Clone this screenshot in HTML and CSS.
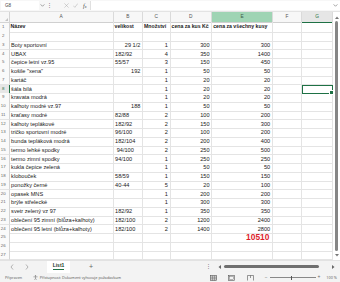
FILE: index.html
```html
<!DOCTYPE html>
<html lang="cs">
<head>
<meta charset="utf-8">
<title>List1</title>
<link rel="stylesheet" href="styles.css">
</head>
<body>
<div class="app">
  <div class="fbar">
    <div class="namebox">G8</div>
    <svg class="ico chev" viewBox="0 0 6 4" width="5" height="3"><path d="M0.5 0.5 L3 3 L5.5 0.5" fill="none" stroke="#666" stroke-width="0.8"/></svg>
    <span class="dots">⋮</span>
    <svg class="ico fx-x" viewBox="0 0 6 6" width="5" height="5"><path d="M0.5 0.5 L5.5 5.5 M5.5 0.5 L0.5 5.5" stroke="#aaa" stroke-width="0.6"/></svg>
    <svg class="ico fx-ok" viewBox="0 0 6 6" width="5" height="5"><path d="M0.3 3.2 L2.2 5.2 L5.8 0.6" fill="none" stroke="#aaa" stroke-width="0.6"/></svg>
    <span class="fx">f<small>x</small></span>
    <div class="finput">
      <svg class="ico" viewBox="0 0 6 4" width="5" height="3"><path d="M0.5 0.5 L3 3 L5.5 0.5" fill="none" stroke="#666" stroke-width="0.8"/></svg>
    </div>
  </div>

  <div class="main">
    <div class="sheet">
      <div class="row hdr">
        <div class="corner"></div><div class="ch">A</div><div class="ch">B</div><div class="ch">C</div><div class="ch">D</div><div class="ch ch-e">E</div><div class="ch">F</div><div class="ch ch-cur">G</div>
      </div>
      <div class="row r1">
        <div class="rh">1</div><div class="c">Název</div><div class="c">velikost</div><div class="c">Množství</div><div class="c">cena za kus Kč</div><div class="c">cena za všechny kusy</div><div class="c"></div><div class="c"></div>
      </div>
      <div class="row">
        <div class="rh">2</div><div class="c"></div><div class="c"></div><div class="c"></div><div class="c"></div><div class="c"></div><div class="c"></div><div class="c"></div>
      </div>
      <div class="row">
        <div class="rh">3</div><div class="c">Boty sportovní</div><div class="c r">29 1/2</div><div class="c r">1</div><div class="c r">300</div><div class="c r">300</div><div class="c"></div><div class="c"></div>
      </div>
      <div class="row">
        <div class="rh">4</div><div class="c">UBAX</div><div class="c">182/92</div><div class="c r">4</div><div class="c r">350</div><div class="c r">1400</div><div class="c"></div><div class="c"></div>
      </div>
      <div class="row">
        <div class="rh">5</div><div class="c">čepice letní vz.95</div><div class="c">55/57</div><div class="c r">3</div><div class="c r">150</div><div class="c r">450</div><div class="c"></div><div class="c"></div>
      </div>
      <div class="row">
        <div class="rh">6</div><div class="c">košile "xena"</div><div class="c r">192</div><div class="c r">1</div><div class="c r">50</div><div class="c r">50</div><div class="c"></div><div class="c"></div>
      </div>
      <div class="row">
        <div class="rh">7</div><div class="c">kartáč</div><div class="c"></div><div class="c r">1</div><div class="c r">20</div><div class="c r">20</div><div class="c"></div><div class="c"></div>
      </div>
      <div class="row">
        <div class="rh rh-cur">8</div><div class="c">šála bílá</div><div class="c"></div><div class="c r">1</div><div class="c r">20</div><div class="c r">20</div><div class="c"></div><div class="c sel"></div>
      </div>
      <div class="row">
        <div class="rh">9</div><div class="c">kravata modrá</div><div class="c"></div><div class="c r">1</div><div class="c r">20</div><div class="c r">20</div><div class="c"></div><div class="c"></div>
      </div>
      <div class="row">
        <div class="rh">10</div><div class="c">kalhoty modré vz.97</div><div class="c r">188</div><div class="c r">1</div><div class="c r">50</div><div class="c r">50</div><div class="c"></div><div class="c"></div>
      </div>
      <div class="row">
        <div class="rh">11</div><div class="c">kraťasy modré</div><div class="c">82/88</div><div class="c r">2</div><div class="c r">100</div><div class="c r">200</div><div class="c"></div><div class="c"></div>
      </div>
      <div class="row">
        <div class="rh">12</div><div class="c">kalhoty teplákové</div><div class="c">182/92</div><div class="c r">2</div><div class="c r">150</div><div class="c r">300</div><div class="c"></div><div class="c"></div>
      </div>
      <div class="row">
        <div class="rh">13</div><div class="c">tričko sportovní modré</div><div class="c">96/100</div><div class="c r">2</div><div class="c r">100</div><div class="c r">200</div><div class="c"></div><div class="c"></div>
      </div>
      <div class="row">
        <div class="rh">14</div><div class="c">bunda tepláková modrá</div><div class="c">182/104</div><div class="c r">2</div><div class="c r">200</div><div class="c r">400</div><div class="c"></div><div class="c"></div>
      </div>
      <div class="row">
        <div class="rh">15</div><div class="c">termo lehké spodky</div><div class="c ind">94/100</div><div class="c r">2</div><div class="c r">250</div><div class="c r">500</div><div class="c"></div><div class="c"></div>
      </div>
      <div class="row">
        <div class="rh">16</div><div class="c">termo zimní spodky</div><div class="c">94/100</div><div class="c r">1</div><div class="c r">250</div><div class="c r">250</div><div class="c"></div><div class="c"></div>
      </div>
      <div class="row">
        <div class="rh">17</div><div class="c">kukla čepice zelená</div><div class="c"></div><div class="c r">1</div><div class="c r">50</div><div class="c r">50</div><div class="c"></div><div class="c"></div>
      </div>
      <div class="row">
        <div class="rh">18</div><div class="c">klobouček</div><div class="c">58/59</div><div class="c r">1</div><div class="c r">150</div><div class="c r">150</div><div class="c"></div><div class="c"></div>
      </div>
      <div class="row">
        <div class="rh">19</div><div class="c">ponožky černé</div><div class="c">40-44</div><div class="c r">5</div><div class="c r">20</div><div class="c r">100</div><div class="c"></div><div class="c"></div>
      </div>
      <div class="row">
        <div class="rh">20</div><div class="c">opasek MNS</div><div class="c"></div><div class="c r">1</div><div class="c r">200</div><div class="c r">200</div><div class="c"></div><div class="c"></div>
      </div>
      <div class="row">
        <div class="rh">21</div><div class="c">brýle střelecké</div><div class="c"></div><div class="c r">1</div><div class="c r">300</div><div class="c r">300</div><div class="c"></div><div class="c"></div>
      </div>
      <div class="row">
        <div class="rh">22</div><div class="c">svetr zelený vz 97</div><div class="c">182/92</div><div class="c r">1</div><div class="c r">350</div><div class="c r">350</div><div class="c"></div><div class="c"></div>
      </div>
      <div class="row">
        <div class="rh">23</div><div class="c">oblečení 95 zimní (blůza+kalhoty)</div><div class="c">182/100</div><div class="c r">2</div><div class="c r">1200</div><div class="c r">2400</div><div class="c"></div><div class="c"></div>
      </div>
      <div class="row">
        <div class="rh">24</div><div class="c">oblečení 95 letní (blůza+kalhoty)</div><div class="c">182/100</div><div class="c r">2</div><div class="c r">1400</div><div class="c r">2800</div><div class="c"></div><div class="c"></div>
      </div>
      <div class="row">
        <div class="rh">25</div><div class="c"></div><div class="c"></div><div class="c"></div><div class="c"></div><div class="c r total">10510</div><div class="c"></div><div class="c"></div>
      </div>
      <div class="row">
        <div class="rh">26</div><div class="c"></div><div class="c"></div><div class="c"></div><div class="c"></div><div class="c"></div><div class="c"></div><div class="c"></div>
      </div>
      <div class="row">
        <div class="rh">27</div><div class="c"></div><div class="c"></div><div class="c"></div><div class="c"></div><div class="c"></div><div class="c"></div><div class="c"></div>
      </div>
    </div>
    <div class="vscroll">
      <svg class="arr" viewBox="0 0 4 3" width="4" height="3"><path d="M0 3 L2 0.5 L4 3 Z" fill="#777"/></svg>
      <div class="vthumb"></div>
      <svg class="arr" viewBox="0 0 4 3" width="4" height="3"><path d="M0 0 L2 2.5 L4 0 Z" fill="#777"/></svg>
    </div>
  </div>

  <div class="tabs">
    <svg class="nav" viewBox="0 0 4 6" width="4" height="6"><path d="M3 0.5 L1 3 L3 5.5" fill="none" stroke="#888" stroke-width="0.6"/></svg>
    <svg class="nav nav2" viewBox="0 0 4 6" width="4" height="6"><path d="M1 0.5 L3 3 L1 5.5" fill="none" stroke="#888" stroke-width="0.6"/></svg>
    <div class="tab"><span>List1</span></div>
    <span class="plus">+</span>
    <div class="hs">
      <span class="hdots">⋮</span>
      <svg viewBox="0 0 3 4" width="3" height="4"><path d="M3 0 L0.5 2 L3 4 Z" fill="#666"/></svg>
      <div class="hthumb"></div>
      <svg viewBox="0 0 3 4" width="3" height="4"><path d="M0 0 L2.5 2 L0 4 Z" fill="#666"/></svg>
    </div>
  </div>

  <div class="status">
    <span class="ready">Připraven</span>
    <svg class="acc" viewBox="0 0 6 6" width="5" height="5"><circle cx="3" cy="1" r="0.8" fill="#666"/><path d="M0.5 2.2 H5.5 M3 2.2 V4 M3 4 L1.8 5.8 M3 4 L4.2 5.8" stroke="#666" stroke-width="0.6" fill="none"/></svg>
    <span class="acct">Přístupnost: Dokument vyhovuje požadavkům</span>
    <div class="views">
      <svg viewBox="0 0 7 6" width="7" height="6"><rect x="0.5" y="0.5" width="6" height="5" fill="#d8d8d8" stroke="#555" stroke-width="0.6"/><path d="M0.5 2.2 H6.5 M0.5 3.8 H6.5 M2.5 0.5 V5.5 M4.5 0.5 V5.5" stroke="#555" stroke-width="0.4"/></svg>
      <svg viewBox="0 0 7 6" width="7" height="6"><rect x="0.5" y="0.5" width="6" height="5" fill="none" stroke="#555" stroke-width="0.6"/><rect x="1.7" y="1.5" width="3.6" height="3" fill="none" stroke="#555" stroke-width="0.4"/></svg>
      <svg viewBox="0 0 7 6" width="7" height="6"><path d="M0.5 5.5 V0.5 H6.5 V5.5 M3.5 0.5 V3" fill="none" stroke="#555" stroke-width="0.6"/></svg>
    </div>
    <div class="zoom">
      <span class="zm">−</span>
      <div class="zline"><div class="zknob"></div></div>
      <span class="zm">+</span>
      <span class="zpct">100 %</span>
    </div>
  </div>
</div>
</body>
</html>
```

FILE: styles.css
```css
* {
  box-sizing: border-box;
  margin: 0;
  padding: 0;
}

html, body {
  width: 340px;
  height: 282px;
  overflow: hidden;
  background: #ffffff;
}

body {
  font-family: "Liberation Sans Narrow", "Liberation Sans", Arial, sans-serif;
  color: #1f1f1f;
}

.app {
  width: 340px;
  height: 282px;
  display: flex;
  flex-direction: column;
}

/* formula bar */
.fbar {
  height: 12px;
  flex: none;
  display: flex;
  align-items: center;
  background: #f7f7f7;
  border-bottom: 1px solid #e3e3e3;
  font-family: "Liberation Sans", Arial, sans-serif;
}

.namebox {
  width: 38px;
  height: 9px;
  margin-left: 1px;
  padding-left: 4px;
  background: #ffffff;
  font-size: 4.6px;
  line-height: 9px;
  color: #444;
}

.ico {
  display: block;
  flex: none;
}

.chev {
  margin-left: 1px;
}

.dots {
  margin-left: 2px;
  font-size: 5px;
  color: #666;
  line-height: 1;
}

.fx-x {
  margin-left: 12px;
}

.fx-ok {
  margin-left: 4px;
}

.fx {
  margin-left: 5px;
  font-family: "Liberation Serif", serif;
  font-style: italic;
  font-size: 6px;
  color: #444;
}

.fx small {
  font-size: 4px;
}

.finput {
  margin-left: 4px;
  flex: 1;
  height: 9px;
  background: #ffffff;
  border-left: 1px solid #e0e0e0;
  display: flex;
  align-items: center;
  justify-content: flex-end;
  padding-right: 2px;
}

/* sheet */
.main {
  flex: none;
  display: flex;
  height: 247.5px;
}

.sheet {
  width: 333px;
  flex: none;
}

.row {
  display: grid;
  grid-template-columns: 9.5px 104px 29.5px 27.5px 41.7px 60.6px 29.4px 30.8px;
  height: 8.75px;
}

.row.hdr,
.row.r1 {
  height: 10px;
}

.corner {
  background: #f7f7f7;
  border-right: 1px solid #d4d4d4;
  border-bottom: 1px solid #d4d4d4;
  position: relative;
}

.corner::after {
  content: "";
  position: absolute;
  right: 1px;
  bottom: 1px;
  border-left: 3px solid transparent;
  border-bottom: 3px solid #c4c4c4;
}

.ch {
  background: #f7f7f7;
  border-right: 1px solid #dadada;
  border-bottom: 1px solid #d0d0d0;
  text-align: center;
  font-family: "Liberation Sans", Arial, sans-serif;
  font-size: 4.8px;
  line-height: 10px;
  color: #555;
}

.ch-e {
  background: #9fd4b4;
  color: #3d5c48;
}

.ch-cur {
  background: #e6e6e6;
  border-bottom: 1px solid #1e7145;
  color: #1e7145;
}

.rh {
  background: #fafafa;
  border-right: 1px solid #d4d4d4;
  border-bottom: 1px solid #e4e4e4;
  text-align: center;
  padding-right: 2px;
  font-family: "Liberation Sans", Arial, sans-serif;
  font-size: 4.4px;
  line-height: 8.5px;
  color: #666;
}

.r1 .rh {
  line-height: 10px;
}

.rh-cur {
  background: #e6e6e6;
  border-right: 1px solid #1e7145;
  color: #1e7145;
}

.c {
  border-right: 1px solid #e4e4e4;
  border-bottom: 1px solid #e4e4e4;
  padding: 0 1.6px;
  overflow: hidden;
  white-space: nowrap;
  font-size: 5.6px;
  line-height: 8.2px;
  color: #1a1a1a;
}

.r1 .c {
  font-weight: bold;
  font-size: 5.2px;
  line-height: 9.4px;
  padding: 0 1px;
}

.r {
  text-align: right;
}

.ind {
  padding-left: 3.2px;
}

.total {
  overflow: visible;
  color: #dd1e2b;
  font-weight: bold;
  font-size: 8.4px;
  line-height: 8.2px;
  padding-right: 2.4px;
}

.sel {
  position: relative;
  overflow: visible;
  outline: 1.2px solid #1e7145;
  outline-offset: -1px;
}

.sel::after {
  content: "";
  position: absolute;
  right: -1.6px;
  bottom: -1.6px;
  width: 2.4px;
  height: 2.4px;
  background: #1e7145;
  border: 0.5px solid #ffffff;
}

/* vertical scrollbar */
.vscroll {
  flex: 1;
  display: flex;
  flex-direction: column;
  align-items: center;
  background: #ffffff;
  padding: 4px 0 3px;
}

.arr {
  display: block;
  flex: none;
}

.vthumb {
  flex: 1;
  width: 2.4px;
  margin: 2px 0 3px;
  background: #868686;
  border-radius: 1.5px;
}

/* sheet tabs */
.tabs {
  height: 13.5px;
  flex: none;
  display: flex;
  align-items: center;
  background: #f3f3f3;
  border-top: 1px solid #e2e2e2;
  padding-left: 10px;
  font-family: "Liberation Sans", Arial, sans-serif;
}

.nav {
  display: block;
  flex: none;
}

.nav2 {
  margin-left: 11px;
}

.tab {
  margin-left: 18px;
  width: 23px;
  height: 12.5px;
  background: #ffffff;
  display: flex;
  align-items: center;
  justify-content: center;
}

.tab span {
  font-size: 5px;
  font-weight: bold;
  color: #1d3a28;
  border-bottom: 1px solid #1e7145;
  line-height: 5.6px;
}

.plus {
  margin-left: 19px;
  font-size: 7px;
  color: #666;
  line-height: 1;
}

.hs {
  margin-left: auto;
  width: 134px;
  display: flex;
  align-items: center;
  padding-right: 5px;
}

.hs svg {
  display: block;
  flex: none;
}

.hdots {
  width: 5px;
  font-size: 5px;
  color: #666;
  line-height: 1;
  text-align: center;
  margin-right: 7px;
}

.hthumb {
  flex: 1;
  height: 2.6px;
  margin: 0 13px 0 3px;
  background: #6f6f6f;
  border-radius: 1.5px;
}

/* status bar */
.status {
  flex: 1;
  display: flex;
  align-items: center;
  background: #f3f3f3;
  font-family: "Open Sans", "Liberation Sans", Arial, sans-serif;
  font-size: 3.8px;
  color: #555;
  padding-left: 5px;
}

.ready {
  flex: none;
}

.acc {
  display: block;
  flex: none;
  margin-left: 11px;
}

.acct {
  margin-left: 1.5px;
  white-space: nowrap;
}

.views {
  margin-left: auto;
  display: flex;
  align-items: center;
  gap: 11.5px;
}

.views svg {
  display: block;
}

.zoom {
  display: flex;
  align-items: center;
  margin-left: 11px;
  padding-right: 3px;
}

.zm {
  font-size: 5px;
  color: #666;
  line-height: 1;
}

.zline {
  position: relative;
  width: 46px;
  height: 0.6px;
  margin: 0 2px;
  background: #888;
}

.zknob {
  position: absolute;
  left: 21.5px;
  top: -1.7px;
  width: 1.4px;
  height: 4px;
  background: #555;
}

.zpct {
  margin-left: 6px;
  font-size: 3.8px;
}
```
